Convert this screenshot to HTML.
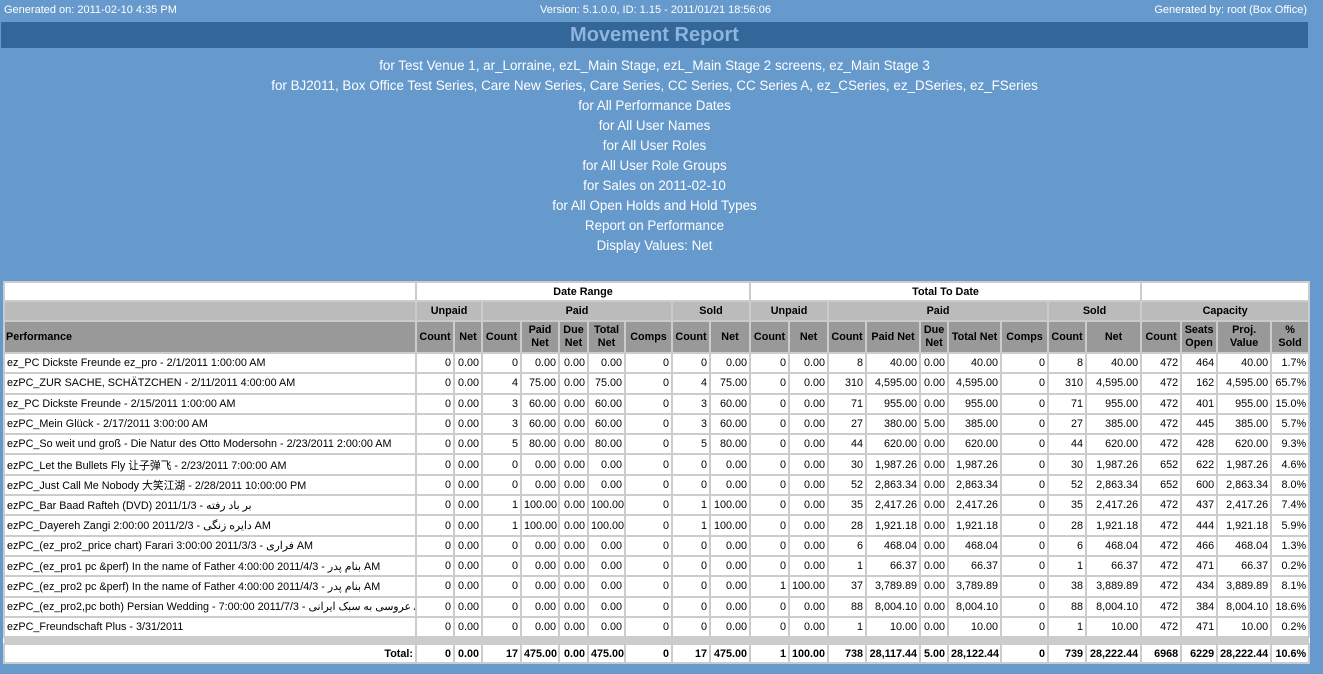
<!DOCTYPE html>
<html><head><meta charset="utf-8">
<style>
html,body{margin:0;padding:0;}
body{width:1323px;height:674px;background:#6699cc;font-family:"Liberation Sans","Noto Sans CJK SC",sans-serif;position:relative;overflow:hidden;}
.top{position:absolute;top:4px;font-size:11px;color:#fff;}
.bar{position:absolute;left:1px;top:22px;width:1307px;height:26px;background:#336699;text-align:center;color:#8fb4de;font-weight:bold;font-size:20px;line-height:26px;}
.sub{position:absolute;left:0;top:56px;width:1309px;text-align:center;color:#fff;font-size:13.4px;line-height:20px;}
table{position:absolute;left:3px;top:281px;width:1305px;border-collapse:collapse;table-layout:fixed;font-size:10.8px;background:#fff;}
td,th{border:2px solid #ccc;padding:0 2px;height:18.3px;white-space:nowrap;overflow:hidden;}
td{text-align:right;color:#000;}
td.p{text-align:left;}
th{font-weight:bold;text-align:center;color:#000;}
tr.h1 th{background:#fff;height:17px;}
tr.h2 th{background:#bbb;height:18px;}
tr.h3 th{background:#999;height:30px;line-height:13px;white-space:normal;padding:0 1px;}
tr.h3 th.pl{text-align:left;}
tr.sp td{background:#ccc;height:5px;border:0;}
tr.tot td{font-weight:bold;height:17px;}
</style></head><body>
<div class="top" style="left:4px">Generated on: 2011-02-10 4:35 PM</div>
<div class="top" style="left:540px">Version: 5.1.0.0, ID: 1.15 - 2011/01/21 18:56:06</div>
<div class="top" style="right:16px">Generated by: root (Box Office)</div>
<div class="bar">Movement Report</div>
<div class="sub">for Test Venue 1, ar_Lorraine, ezL_Main Stage, ezL_Main Stage 2 screens, ez_Main Stage 3<br>for BJ2011, Box Office Test Series, Care New Series, Care Series, CC Series, CC Series A, ez_CSeries, ez_DSeries, ez_FSeries<br>for All Performance Dates<br>for All User Names<br>for All User Roles<br>for All User Role Groups<br>for Sales on 2011-02-10<br>for All Open Holds and Hold Types<br>Report on Performance<br>Display Values: Net</div>
<table>
<colgroup><col style="width:412px"><col style="width:38px"><col style="width:28px"><col style="width:39px"><col style="width:38px"><col style="width:29px"><col style="width:37px"><col style="width:47px"><col style="width:38px"><col style="width:40px"><col style="width:39px"><col style="width:39px"><col style="width:38px"><col style="width:54px"><col style="width:28px"><col style="width:53px"><col style="width:47px"><col style="width:38px"><col style="width:55px"><col style="width:40px"><col style="width:36px"><col style="width:54px"><col style="width:38px"></colgroup>
<tr class="h1"><th></th><th colspan="9">Date Range</th><th colspan="9">Total To Date</th><th colspan="4"></th></tr>
<tr class="h2"><th style="background:#bbb"></th><th colspan="2">Unpaid</th><th colspan="5">Paid</th><th colspan="2">Sold</th><th colspan="2">Unpaid</th><th colspan="5">Paid</th><th colspan="2">Sold</th><th colspan="4">Capacity</th></tr>
<tr class="h3"><th class="pl">Performance</th><th>Count</th><th>Net</th><th>Count</th><th>Paid Net</th><th>Due Net</th><th>Total Net</th><th>Comps</th><th>Count</th><th>Net</th><th>Count</th><th>Net</th><th>Count</th><th>Paid Net</th><th>Due Net</th><th>Total Net</th><th>Comps</th><th>Count</th><th>Net</th><th>Count</th><th>Seats Open</th><th>Proj. Value</th><th>% Sold</th></tr>
<tr><td class="p">ez_PC Dickste Freunde ez_pro - 2/1/2011 1:00:00 AM</td><td>0</td><td>0.00</td><td>0</td><td>0.00</td><td>0.00</td><td>0.00</td><td>0</td><td>0</td><td>0.00</td><td>0</td><td>0.00</td><td>8</td><td>40.00</td><td>0.00</td><td>40.00</td><td>0</td><td>8</td><td>40.00</td><td>472</td><td>464</td><td>40.00</td><td>1.7%</td></tr>
<tr><td class="p">ezPC_ZUR SACHE, SCHÄTZCHEN - 2/11/2011 4:00:00 AM</td><td>0</td><td>0.00</td><td>4</td><td>75.00</td><td>0.00</td><td>75.00</td><td>0</td><td>4</td><td>75.00</td><td>0</td><td>0.00</td><td>310</td><td>4,595.00</td><td>0.00</td><td>4,595.00</td><td>0</td><td>310</td><td>4,595.00</td><td>472</td><td>162</td><td>4,595.00</td><td>65.7%</td></tr>
<tr><td class="p">ez_PC Dickste Freunde - 2/15/2011 1:00:00 AM</td><td>0</td><td>0.00</td><td>3</td><td>60.00</td><td>0.00</td><td>60.00</td><td>0</td><td>3</td><td>60.00</td><td>0</td><td>0.00</td><td>71</td><td>955.00</td><td>0.00</td><td>955.00</td><td>0</td><td>71</td><td>955.00</td><td>472</td><td>401</td><td>955.00</td><td>15.0%</td></tr>
<tr><td class="p">ezPC_Mein Glück - 2/17/2011 3:00:00 AM</td><td>0</td><td>0.00</td><td>3</td><td>60.00</td><td>0.00</td><td>60.00</td><td>0</td><td>3</td><td>60.00</td><td>0</td><td>0.00</td><td>27</td><td>380.00</td><td>5.00</td><td>385.00</td><td>0</td><td>27</td><td>385.00</td><td>472</td><td>445</td><td>385.00</td><td>5.7%</td></tr>
<tr><td class="p">ezPC_So weit und groß - Die Natur des Otto Modersohn - 2/23/2011 2:00:00 AM</td><td>0</td><td>0.00</td><td>5</td><td>80.00</td><td>0.00</td><td>80.00</td><td>0</td><td>5</td><td>80.00</td><td>0</td><td>0.00</td><td>44</td><td>620.00</td><td>0.00</td><td>620.00</td><td>0</td><td>44</td><td>620.00</td><td>472</td><td>428</td><td>620.00</td><td>9.3%</td></tr>
<tr><td class="p">ezPC_Let the Bullets Fly 让子弹飞 - 2/23/2011 7:00:00 AM</td><td>0</td><td>0.00</td><td>0</td><td>0.00</td><td>0.00</td><td>0.00</td><td>0</td><td>0</td><td>0.00</td><td>0</td><td>0.00</td><td>30</td><td>1,987.26</td><td>0.00</td><td>1,987.26</td><td>0</td><td>30</td><td>1,987.26</td><td>652</td><td>622</td><td>1,987.26</td><td>4.6%</td></tr>
<tr><td class="p">ezPC_Just Call Me Nobody 大笑江湖 - 2/28/2011 10:00:00 PM</td><td>0</td><td>0.00</td><td>0</td><td>0.00</td><td>0.00</td><td>0.00</td><td>0</td><td>0</td><td>0.00</td><td>0</td><td>0.00</td><td>52</td><td>2,863.34</td><td>0.00</td><td>2,863.34</td><td>0</td><td>52</td><td>2,863.34</td><td>652</td><td>600</td><td>2,863.34</td><td>8.0%</td></tr>
<tr><td class="p">ezPC_Bar Baad Rafteh (DVD) 2011/1/3 - بر باد رفته</td><td>0</td><td>0.00</td><td>1</td><td>100.00</td><td>0.00</td><td>100.00</td><td>0</td><td>1</td><td>100.00</td><td>0</td><td>0.00</td><td>35</td><td>2,417.26</td><td>0.00</td><td>2,417.26</td><td>0</td><td>35</td><td>2,417.26</td><td>472</td><td>437</td><td>2,417.26</td><td>7.4%</td></tr>
<tr><td class="p">ezPC_Dayereh Zangi 2:00:00 2011/2/3 - دایره زنگی AM</td><td>0</td><td>0.00</td><td>1</td><td>100.00</td><td>0.00</td><td>100.00</td><td>0</td><td>1</td><td>100.00</td><td>0</td><td>0.00</td><td>28</td><td>1,921.18</td><td>0.00</td><td>1,921.18</td><td>0</td><td>28</td><td>1,921.18</td><td>472</td><td>444</td><td>1,921.18</td><td>5.9%</td></tr>
<tr><td class="p">ezPC_(ez_pro2_price chart) Farari 3:00:00 2011/3/3 - فراری AM</td><td>0</td><td>0.00</td><td>0</td><td>0.00</td><td>0.00</td><td>0.00</td><td>0</td><td>0</td><td>0.00</td><td>0</td><td>0.00</td><td>6</td><td>468.04</td><td>0.00</td><td>468.04</td><td>0</td><td>6</td><td>468.04</td><td>472</td><td>466</td><td>468.04</td><td>1.3%</td></tr>
<tr><td class="p">ezPC_(ez_pro1 pc &amp;perf) In the name of Father 4:00:00 2011/4/3 - بنام پدر AM</td><td>0</td><td>0.00</td><td>0</td><td>0.00</td><td>0.00</td><td>0.00</td><td>0</td><td>0</td><td>0.00</td><td>0</td><td>0.00</td><td>1</td><td>66.37</td><td>0.00</td><td>66.37</td><td>0</td><td>1</td><td>66.37</td><td>472</td><td>471</td><td>66.37</td><td>0.2%</td></tr>
<tr><td class="p">ezPC_(ez_pro2 pc &amp;perf) In the name of Father 4:00:00 2011/4/3 - بنام پدر AM</td><td>0</td><td>0.00</td><td>0</td><td>0.00</td><td>0.00</td><td>0.00</td><td>0</td><td>0</td><td>0.00</td><td>1</td><td>100.00</td><td>37</td><td>3,789.89</td><td>0.00</td><td>3,789.89</td><td>0</td><td>38</td><td>3,889.89</td><td>472</td><td>434</td><td>3,889.89</td><td>8.1%</td></tr>
<tr><td class="p">ezPC_(ez_pro2,pc both) Persian Wedding - 7:00:00 2011/7/3 - عروسی به سبک ایرانی AM</td><td>0</td><td>0.00</td><td>0</td><td>0.00</td><td>0.00</td><td>0.00</td><td>0</td><td>0</td><td>0.00</td><td>0</td><td>0.00</td><td>88</td><td>8,004.10</td><td>0.00</td><td>8,004.10</td><td>0</td><td>88</td><td>8,004.10</td><td>472</td><td>384</td><td>8,004.10</td><td>18.6%</td></tr>
<tr><td class="p">ezPC_Freundschaft Plus - 3/31/2011</td><td>0</td><td>0.00</td><td>0</td><td>0.00</td><td>0.00</td><td>0.00</td><td>0</td><td>0</td><td>0.00</td><td>0</td><td>0.00</td><td>1</td><td>10.00</td><td>0.00</td><td>10.00</td><td>0</td><td>1</td><td>10.00</td><td>472</td><td>471</td><td>10.00</td><td>0.2%</td></tr>
<tr class="sp"><td colspan="23"></td></tr>
<tr class="tot"><td>Total:</td><td>0</td><td>0.00</td><td>17</td><td>475.00</td><td>0.00</td><td>475.00</td><td>0</td><td>17</td><td>475.00</td><td>1</td><td>100.00</td><td>738</td><td>28,117.44</td><td>5.00</td><td>28,122.44</td><td>0</td><td>739</td><td>28,222.44</td><td>6968</td><td>6229</td><td>28,222.44</td><td>10.6%</td></tr>
</table>
</body></html>
